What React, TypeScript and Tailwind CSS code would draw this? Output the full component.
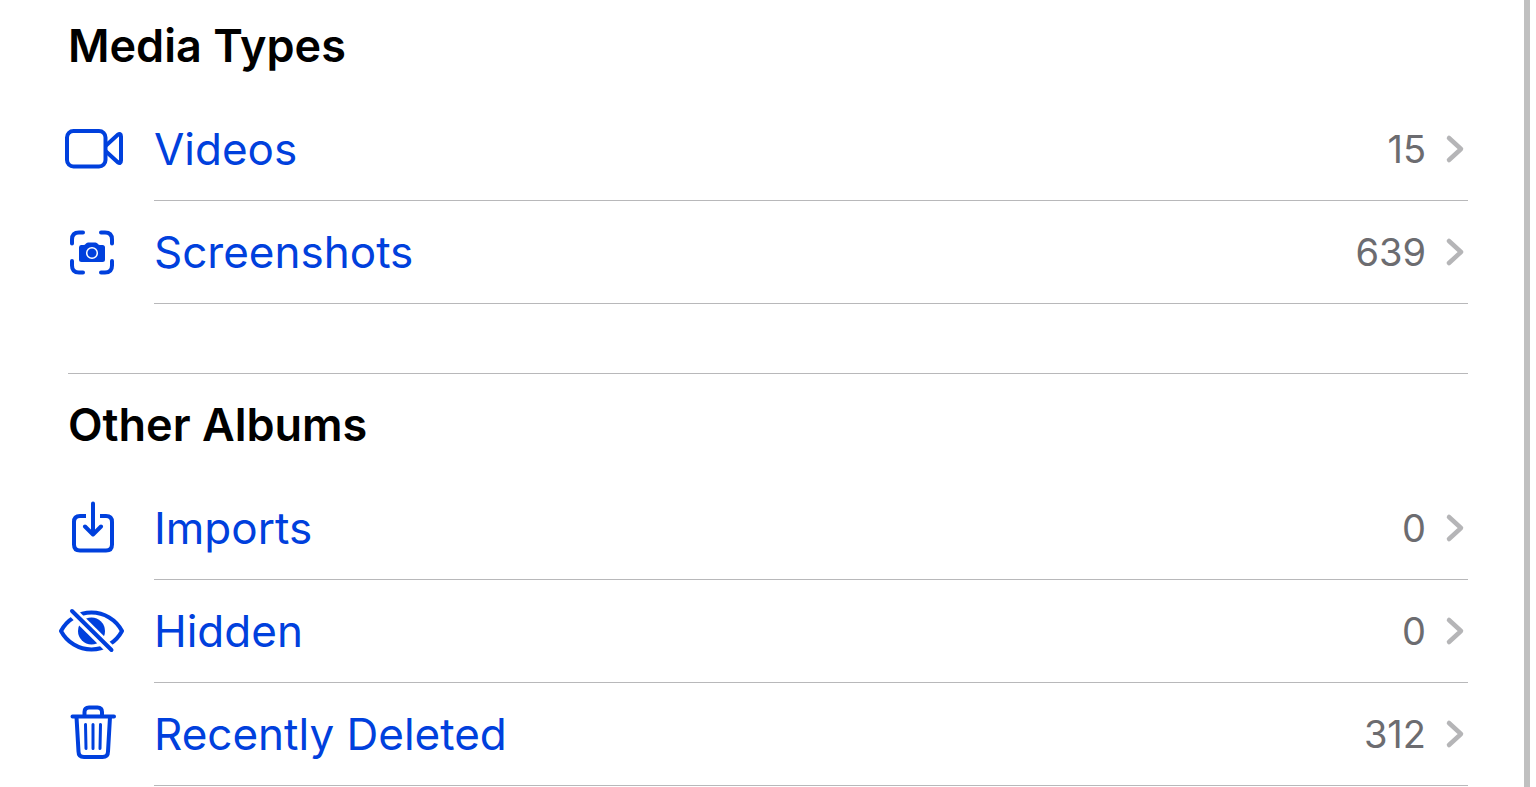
import type { ReactNode } from "react";

type Album = {
  name: string;
  count: number;
  icon: ReactNode;
};

const VideoIcon = () => (
  <svg width="66" height="60" viewBox="0 0 66 60" fill="none" stroke="currentColor" strokeWidth="4" strokeLinejoin="round" aria-hidden="true">
    <rect x="9" y="11" width="38.5" height="35.5" rx="6.5" />
    <path d="M47.5 26 59.500 15Q63 12.500 63 16.500V40.500Q63 44.500 59.500 42L47.500 31" />
  </svg>
);

const ScreenshotIcon = () => (
  <svg width="66" height="60" viewBox="0 0 66 60" fill="none" aria-hidden="true">
    <g stroke="currentColor" strokeWidth="4" strokeLinecap="round">
      <path d="M14 20.5V16.500Q14 9.500 21 9.500H25" />
      <path d="M43 9.500H47Q54 9.500 54 16.500V20.500" />
      <path d="M54 38V42.500Q54 49.500 47 49.500H43" />
      <path d="M25 49.500H21Q14 49.500 14 42.500V38" />
    </g>
    <path
      d="M23 22H25.500Q27 22 27.500 21 28.500 19.500 30 19.500H37.500Q39 19.500 40 21 40.500 22 42 22H44.500Q47 22 47 24.500V36.500Q47 39 44.500 39H23.500Q21 39 21 36.500V24.500Q21 22 23 22Z"
      fill="currentColor"
    />
    <circle cx="34" cy="30" r="5.300" stroke="white" strokeWidth="1.500" />
  </svg>
);

const ImportIcon = () => (
  <svg width="66" height="60" viewBox="0 0 66 60" fill="none" stroke="currentColor" strokeWidth="4" aria-hidden="true">
    <path d="M28 17H22Q16 17 16 23V45.500Q16 51.500 22 51.500H48Q54 51.500 54 45.500V23Q54 17 48 17H42" />
    <path d="M35 4.500V35M27 27.500 35 35.500 43 27.500" strokeLinecap="round" strokeLinejoin="round" />
  </svg>
);

const HiddenIcon = () => (
  <svg width="66" height="60" viewBox="0 0 66 60" fill="none" aria-hidden="true">
    <path
      d="M3 29C9 17.500 21 10.500 33.500 10.500S58 17.500 64 29C58 40.500 46 47.500 33.500 47.500S9 40.500 3 29Z"
      stroke="currentColor"
      strokeWidth="4"
      strokeLinejoin="round"
    />
    <circle cx="33.500" cy="29" r="13.500" fill="currentColor" />
    <path d="M9 4.500 58 53" stroke="white" strokeWidth="10" />
    <path d="M14 9 53.500 48" stroke="currentColor" strokeWidth="4" strokeLinecap="round" />
  </svg>
);

const TrashIcon = () => (
  <svg width="66" height="60" viewBox="0 0 66 60" fill="none" stroke="currentColor" strokeWidth="4" strokeLinecap="round" strokeLinejoin="round" aria-hidden="true">
    <path d="M14.500 11.500H56M26.500 11V7Q26.500 2.500 31 2.500H39.500Q44 2.500 44 7V11" />
    <path d="M18.500 12 20.500 46.500Q20.500 52 26 52H44.500Q50 52 50 46.500L52 12" />
    <path d="M27.500 19.500 28 43.500M35 19.500V43.500M42.500 19.500 42 43.500" strokeWidth="3" />
  </svg>
);

const Chevron = () => (
  <svg width="24" height="30" viewBox="0 0 24 30" fill="none" stroke="#b5b5b7" strokeWidth="4.500" strokeLinecap="round" strokeLinejoin="round" aria-hidden="true">
    <path d="M5 4 17 15 5 26" />
  </svg>
);

const mediaTypes: Album[] = [
  { name: "Videos", count: 15, icon: <VideoIcon /> },
  { name: "Screenshots", count: 639, icon: <ScreenshotIcon /> },
];

const otherAlbums: Album[] = [
  { name: "Imports", count: 0, icon: <ImportIcon /> },
  { name: "Hidden", count: 0, icon: <HiddenIcon /> },
  { name: "Recently Deleted", count: 312, icon: <TrashIcon /> },
];

function AlbumList({ albums }: { albums: Album[] }) {
  return (
    <ul>
      {albums.map((album) => (
        <li key={album.name}>
          <a href="#" className="flex h-[103px] items-stretch text-[#0040dd]">
            <span className="flex w-24 shrink-0 items-center">{album.icon}</span>
            <span className="flex flex-1 items-center border-b border-[#b8b8ba]">
              <span className="flex-1 text-[44px] leading-14">{album.name}</span>
              <span className="mr-[18px] text-[38px] leading-12 text-[#6c6c70]">{album.count}</span>
              <Chevron />
            </span>
          </a>
        </li>
      ))}
    </ul>
  );
}

export default function App() {
  return (
    <div className="flex min-h-screen bg-white font-['Inter',sans-serif]">
      <main className="flex-1 pr-14 pl-[58px]">
        <section className="pt-[18px] pb-[69px]">
          <h2 className="mb-6 ml-2.5 text-[45px] leading-14 font-semibold text-black">Media Types</h2>
          <AlbumList albums={mediaTypes} />
        </section>
        <section>
          <div className="mb-6 ml-2.5 border-t border-[#b8b8ba] pt-[23px]">
            <h2 className="text-[45px] leading-14 font-semibold text-black">Other Albums</h2>
          </div>
          <AlbumList albums={otherAlbums} />
        </section>
      </main>
      <div className="mr-1.5 w-1.5 bg-[#c0c0c0]" />
    </div>
  );
}
